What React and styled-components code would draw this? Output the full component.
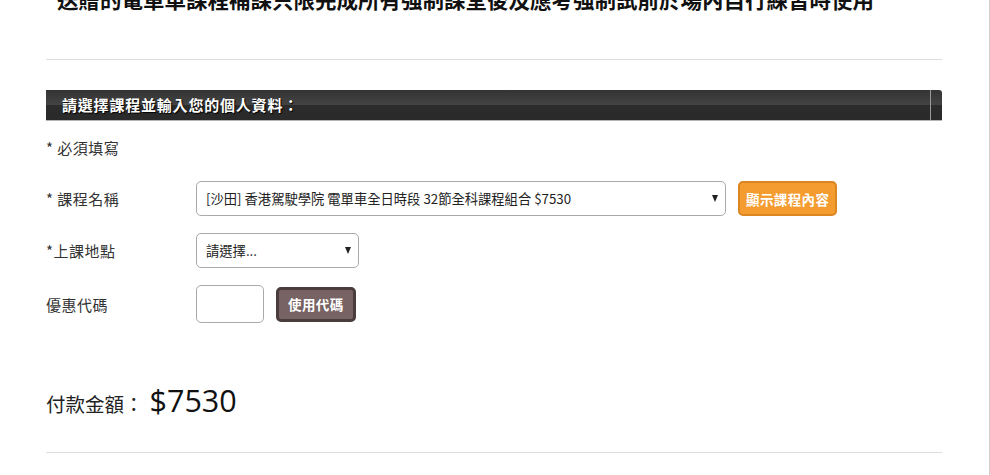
import React from 'react'
import styled, { createGlobalStyle } from 'styled-components'

const GlobalStyle = createGlobalStyle`
body {
  margin: 0;
  background: #fff;
  font-family: "Noto Sans CJK TC", "Liberation Sans", sans-serif;
  color: #333;
}
`
const Page = styled.div`
width: 989px;
min-height: 475px;
border-right: 1px solid #cfcfcf;
overflow: hidden;
`
const Content = styled.div`
padding: 0 47px 0 46px;
`
const Notice = styled.div`
margin-top: -13px;
padding-left: 11px;
font-size: 21.5px;
line-height: 24px;
font-weight: 700;
color: #111;
white-space: nowrap;
`
const Divider = styled.div`
height: 1px;
background: #dddddd;
margin-top: ${p => p.top}px;
`
const SectionBar = styled.div`
margin-top: 30px;
height: 30px;
display: flex;
background: linear-gradient(to bottom, #333 0%, #444 50%, #2c2c2c 50%, #2a2a2a 100%);
border-bottom: 1px solid #b5b5b5;
border-top-right-radius: 3px;
`
const SectionTitle = styled.div`
flex: 1;
padding-left: 16px;
color: #fff;
font-size: 15px;
font-weight: 700;
line-height: 30px;
letter-spacing: 0.8px;
text-shadow: 1px 1px 1px #000;
border-right: 1px solid #9a9a9a;
`
const SectionEnd = styled.div`
width: 11px;
`
const Required = styled.div`
margin-top: 17px;
font-size: 15px;
letter-spacing: 0.5px;
line-height: 20px;
`
const Form = styled.div`
margin-top: 23px;
display: grid;
grid-template-columns: 150px 1fr;
row-gap: 17px;
align-items: center;
`
const Label = styled.div`
font-size: 15px;
letter-spacing: 0.5px;
`
const Field = styled.div`
display: flex;
align-items: center;
gap: 12px;
`
const SelectBox = styled.div`
width: ${p => p.w}px;
height: 35px;
box-sizing: border-box;
border: 1px solid #aaa;
border-radius: 5px;
display: flex;
align-items: center;
justify-content: space-between;
padding: 0 7px 0 9px;
font-size: 13.3px;
color: #222;
background: #fff;
`
const Arrow = styled.span`
width: 0;
height: 0;
border-left: 3.5px solid transparent;
border-right: 3.5px solid transparent;
border-top: 7px solid #222;
`
const TextBox = styled.div`
width: 68px;
height: 38px;
box-sizing: border-box;
border: 1px solid #aaa;
border-radius: 5px;
`
const Button = styled.div`
height: 35px;
box-sizing: border-box;
padding: 0 ${p => p.pad}px;
display: flex;
align-items: center;
border-radius: 5px;
border: ${p => p.bw}px solid ${p => p.edge};
background: ${p => p.bg};
color: #fff;
font-size: 13.5px;
font-weight: 700;
letter-spacing: 0.4px;
`
const Total = styled.div`
margin-top: 56px;
display: flex;
align-items: baseline;
`
const TotalLabel = styled.span`
font-size: 19.5px;
color: #222;
`
const TotalValue = styled.span`
font-family: "Open Sans", "Noto Sans", sans-serif;
font-size: 30.5px;
color: #111;
margin-left: 6px;
`

export default function App() {
    return (
        <Page>
            <GlobalStyle/>
            <Content>
                <Notice>送贈的電單車課程補課只限完成所有強制課堂後及應考強制試前於場內自行練習時使用</Notice>
                <Divider top={48}/>
                <SectionBar>
                    <SectionTitle>請選擇課程並輸入您的個人資料：</SectionTitle>
                    <SectionEnd/>
                </SectionBar>
                <Required>* 必須填寫</Required>
                <Form>
                    <Label>* 課程名稱</Label>
                    <Field>
                        <SelectBox w={530}>
                            <span>[沙田] 香港駕駛學院 電單車全日時段 32節全科課程組合 $7530</span>
                            <Arrow/>
                        </SelectBox>
                        <Button bg="#f49c30" edge="#dc8622" bw={2} pad={6}>顯示課程內容</Button>
                    </Field>
                    <Label>*上課地點</Label>
                    <Field>
                        <SelectBox w={163}>
                            <span>請選擇...</span>
                            <Arrow/>
                        </SelectBox>
                    </Field>
                    <Label>優惠代碼</Label>
                    <Field>
                        <TextBox/>
                        <Button bg="#776363" edge="#4b3d3d" bw={3} pad={9}>使用代碼</Button>
                    </Field>
                </Form>
                <Total>
                    <TotalLabel>付款金額：</TotalLabel>
                    <TotalValue>$7530</TotalValue>
                </Total>
                <Divider top={31}/>
            </Content>
        </Page>
    )
}
